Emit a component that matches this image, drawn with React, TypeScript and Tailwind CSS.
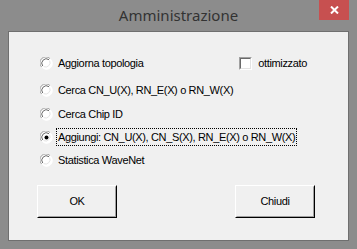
import React from 'react';

function Radio({ checked }: { checked?: boolean }) {
    return (
        <svg width="13" height="13" viewBox="0 0 13 13" className="shrink-0">
            <circle cx="6.5" cy="6.5" r="6" fill="#ffffff" />
            <path d="M1.6 10 A5.6 5.6 0 0 1 10 1.6" fill="none" stroke="#a0a0a0" strokeWidth="1" />
            <path d="M2.7 9 A4.5 4.5 0 0 1 9 2.7" fill="none" stroke="#696969" strokeWidth="1" />
            <path d="M10.6 2.6 A5.6 5.6 0 0 1 2.6 10.6" fill="none" stroke="#ffffff" strokeWidth="1" />
            <path d="M9.6 3.6 A4.5 4.5 0 0 1 3.6 9.6" fill="none" stroke="#e3e3e3" strokeWidth="1" />
            {checked && <circle cx="6.5" cy="6.5" r="2" fill="#000000" />}
        </svg>
    );
}

function Check() {
    return (
        <div className="w-[13px] h-[13px] shrink-0 border border-t-[#a0a0a0] border-l-[#a0a0a0] border-r-white border-b-white">
            <div className="w-full h-full bg-white border border-t-[#696969] border-l-[#696969] border-r-[#e3e3e3] border-b-[#e3e3e3]" />
        </div>
    );
}

function Button({ label }: { label: string }) {
    return (
        <div className="w-[80px] h-[33px] border border-t-white border-l-white border-r-[#000000] border-b-[#000000]">
            <div className="w-full h-full flex items-center justify-center bg-[#f0f0f0] border border-t-[#f0f0f0] border-l-[#f0f0f0] border-r-[#a0a0a0] border-b-[#a0a0a0]">
                {label}
            </div>
        </div>
    );
}

const options = [
    'Aggiorna topologia',
    'Cerca CN_U(X), RN_E(X) o RN_W(X)',
    'Cerca Chip ID',
    'Aggiungi: CN_U(X), CN_S(X), RN_E(X) o RN_W(X)',
    'Statistica WaveNet',
];

export default function App() {
    return (
        <div className="w-[357px] h-[249px] bg-[#8c8c8c] flex flex-col relative">
            {/* Title bar */}
            <div className="h-[31px] flex items-center justify-center text-[15px] text-[#333333] pb-[1px] font-['Noto_Sans',sans-serif]">
                Amministrazione
            </div>
            <div className="absolute top-0 left-[319px] w-[30px] h-[20px] bg-[#c75050] flex items-center justify-center">
                <svg width="9" height="8" viewBox="0 0 9 8">
                    <path d="M1 0.5 L8 7.5 M8 0.5 L1 7.5" stroke="#ffffff" strokeWidth="2" />
                </svg>
            </div>

            {/* Client */}
            <div className="mx-[8px] mb-[8px] flex-1 bg-[#f0f0f0] border border-[#6f6f6f] text-[11px] tracking-[-0.35px] text-black whitespace-nowrap font-['Liberation_Sans',Arial,sans-serif]">
                <div className="pt-[21px] pl-[31px] pr-[41px] flex flex-col">
                    {options.map((o, i) => (
                        <div
                            key={o}
                            className={
                                'flex items-center gap-[4px] h-[20px] ' +
                                (i === 0 ? 'mb-[7px]' : i === 1 ? 'mb-[4px]' : 'mb-[3px]')
                            }
                        >
                            <Radio checked={i === 3} />
                            <span
                                className={
                                    'px-[1px] ' + (i === 3 ? 'outline outline-1 outline-dotted outline-black' : '')
                                }
                            >
                                {o}
                            </span>
                            {i === 0 && (
                                <div className="ml-auto flex items-center gap-[6px]">
                                    <Check />
                                    <span>ottimizzato</span>
                                </div>
                            )}
                        </div>
                    ))}
                </div>
                <div className="mt-[12px] pl-[28px] pr-[33px] flex justify-between">
                    <Button label="OK" />
                    <Button label="Chiudi" />
                </div>
            </div>
        </div>
    );
}
